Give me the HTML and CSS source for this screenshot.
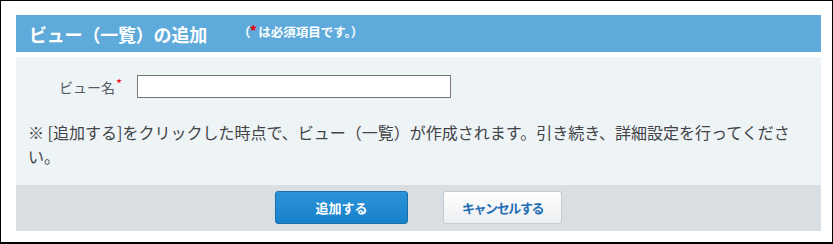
FILE: index.html
```html
<!DOCTYPE html>
<html lang="ja">
<head>
<meta charset="utf-8">
<title>ビュー（一覧）の追加</title>
<link rel="stylesheet" href="styles.css">
</head>
<body>
<div class="frame">
  <div class="header">
    <h1 class="title">ビュー（一覧）の追加</h1>
    <span class="subtitle">（<span class="req">*</span>は必須項目です。）</span>
  </div>
  <div class="content">
    <div class="field-row">
      <label class="field-label" for="viewname">ビュー名<span class="req-mark">*</span></label>
      <input class="text-input" id="viewname" type="text">
    </div>
    <p class="note">※ [追加する]をクリックした時点で、ビュー（一覧）が作成されます。引き続き、詳細設定を行ってください。</p>
  </div>
  <div class="footer">
    <button class="btn btn-primary" type="button">追加する</button>
    <button class="btn btn-secondary" type="button">キャンセルする</button>
  </div>
</div>
</body>
</html>
```
FILE: styles.css
```css
* { box-sizing: border-box; }
html, body { margin: 0; padding: 0; background: #fff; }
body {
  font-family: "Noto Sans CJK JP", "Noto Sans", sans-serif;
  width: 833px;
  height: 244px;
  overflow: hidden;
}
.frame {
  width: 833px;
  height: 244px;
  border-top: 1px solid #000;
  border-left: 1px solid #000;
  border-right: 1px solid #000;
  border-bottom: 2px solid #000;
  padding: 14px 11px 0 15px;
  display: flex;
  flex-direction: column;
}
.header {
  height: 37px;
  background: #5eaadb;
  display: flex;
  align-items: center;
  padding-left: 13px;
  color: #fff;
}
.title {
  margin: 0;
  font-size: 18px;
  font-weight: bold;
  line-height: 1;
  letter-spacing: -0.2px;
}
.subtitle {
  margin-left: 31px;
  font-size: 12.5px;
  font-weight: bold;
  line-height: 1;
  position: relative;
  top: -3px;
}
.req {
  color: #e60012;
  font-size: 15px;
  margin: 0 1px 0 -1px;
}
.content {
  margin-top: 5px;
  height: 128px;
  background: #eef3f6;
  padding: 18px 17px 0 12px;
}
.field-row {
  display: flex;
  align-items: center;
  padding-left: 31px;
}
.field-label {
  font-size: 14px;
  color: #555b62;
  line-height: 1;
  width: 78px;
}
.req-mark {
  color: #e60012;
  font-size: 13px;
  vertical-align: top;
  position: relative;
  top: -3px;
  margin-left: 1px;
}
.text-input {
  width: 314px;
  height: 23px;
  border: 1px solid #767676;
  background: #fff;
  margin: 0;
  padding: 0 4px;
  font: inherit;
  font-size: 13px;
}
.note {
  margin: 22px 0 0 0;
  font-size: 16px;
  line-height: 24px;
  color: #414346;
}
.footer {
  height: 46px;
  background: #d9dee2;
  display: flex;
  justify-content: center;
  align-items: flex-start;
  padding-top: 6px;
  gap: 35px;
}
.btn {
  height: 33px;
  border-radius: 3px;
  font-family: "Noto Sans CJK JP", "Noto Sans", sans-serif;
  font-size: 13px;
  font-weight: bold;
  padding: 0;
  margin: 0;
  cursor: pointer;
}
.btn-primary {
  width: 133px;
  color: #fff;
  background: linear-gradient(#2b93da, #1882ca);
  border: 1px solid #1a6eaa;
}
.btn-secondary {
  width: 119px;
  color: #1f6db4;
  background: linear-gradient(#ffffff, #eceef0);
  border: 1px solid #c4cacf;
  letter-spacing: -1.4px;
}
```
